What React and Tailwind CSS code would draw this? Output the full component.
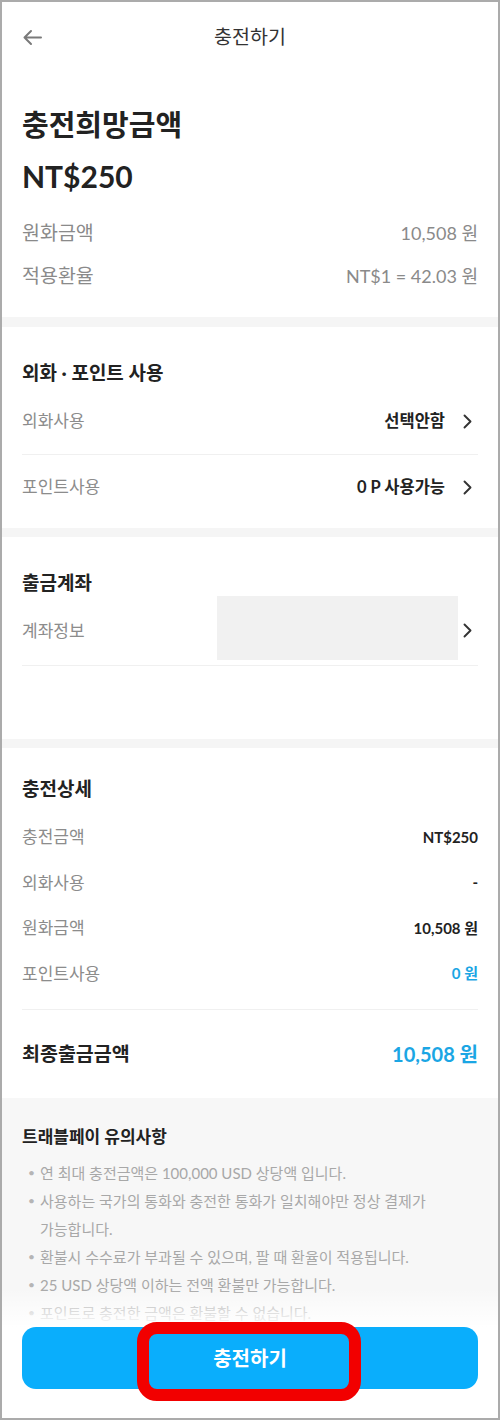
import React from "react";

const FONT = { fontFamily: "Lato, 'Noto Sans CJK KR', 'Noto Sans', sans-serif" };

function Chevron({ className = "" }) {
  return (
    <svg width="9" height="15" viewBox="0 0 9 15" className={className} fill="none">
      <path d="M1.5 1.5 L7.5 7.5 L1.5 13.5" stroke="#333" strokeWidth="1.9" strokeLinecap="round" strokeLinejoin="round" />
    </svg>
  );
}

function DetailRow({ label, value, valueClass = "text-[#222]" }) {
  return (
    <div className="flex h-[45.5px] items-center justify-between">
      <span className="text-[17px] text-[#8c8c8c]">{label}</span>
      <span className={`text-[15px] font-bold ${valueClass}`}>{value}</span>
    </div>
  );
}

const notes = [
  "연 최대 충전금액은 100,000 USD 상당액 입니다.",
  "사용하는 국가의 통화와 충전한 통화가 일치해야만 정상 결제가 가능합니다.",
  "환불시 수수료가 부과될 수 있으며, 팔 때 환율이 적용됩니다.",
  "25 USD 상당액 이하는 전액 환불만 가능합니다.",
  "포인트로 충전한 금액은 환불할 수 없습니다.",
  "해외 가맹점 결제 시 현지 통화로 결제됩니다.",
];

export default function App() {
  return (
    <div style={FONT} className="relative h-[1420px] w-[500px] overflow-hidden border-2 border-[#ababab] bg-white text-[#222]">
      {/* Header */}
      <div className="relative flex h-[70px] items-center justify-center">
        <svg className="absolute left-[20px] top-[27px]" width="20" height="17" viewBox="0 0 20 17" fill="none">
          <path d="M19 8.5H2.5 M9 2 L2.5 8.5 L9 15" stroke="#7a7a7a" strokeWidth="2" strokeLinecap="round" strokeLinejoin="round" />
        </svg>
        <span className="text-[19.5px] text-[#333]">충전하기</span>
      </div>

      {/* Section 1 */}
      <div className="px-5 pt-[35px] pb-[29px]">
        <div className="text-[29px] font-bold leading-[36px]">충전희망금액</div>
        <div className="mt-[15px] text-[30px] font-bold leading-[36px]">NT$250</div>
        <div className="mt-[27px] flex h-[24px] items-center justify-between text-[#8a8a8a]">
          <span className="text-[19.5px]">원화금액</span>
          <span className="text-[18px]">10,508 원</span>
        </div>
        <div className="mt-[19px] flex h-[24px] items-center justify-between text-[#8a8a8a]">
          <span className="text-[19.5px]">적용환율</span>
          <span className="text-[18px]">NT$1 = 42.03 원</span>
        </div>
      </div>

      <div className="h-[10px] bg-[#f5f5f5]" />

      {/* Section 2 */}
      <div className="px-5 pt-[33px] pb-[9px]">
        <div className="text-[19px] font-bold leading-[26px]">외화 · 포인트 사용</div>
        <div className="mt-[2px] flex h-[67px] items-center justify-between border-b border-[#f0f0f0]">
          <span className="text-[17px] text-[#8c8c8c]">외화사용</span>
          <div className="flex items-center gap-[18px]">
            <span className="text-[16.5px] font-bold">선택안함</span>
            <Chevron className="mr-[6px]" />
          </div>
        </div>
        <div className="flex h-[64px] items-center justify-between">
          <span className="text-[17px] text-[#8c8c8c]">포인트사용</span>
          <div className="flex items-center gap-[18px]">
            <span className="text-[16.5px] font-bold">0 P 사용가능</span>
            <Chevron className="mr-[6px]" />
          </div>
        </div>
      </div>

      <div className="h-[9px] bg-[#f5f5f5]" />

      {/* Section 3 */}
      <div className="px-5 pt-[33px] pb-[73px]">
        <div className="text-[19px] font-bold leading-[26px]">출금계좌</div>
        <div className="flex h-[70px] items-center justify-between border-b border-[#f0f0f0]">
          <span className="text-[17px] text-[#8c8c8c]">계좌정보</span>
          <div className="flex h-full items-center">
            <div className="h-[64px] w-[241px] self-start bg-[#f1f1f1]" />
            <Chevron className="ml-[5px] mr-[6px]" />
          </div>
        </div>
      </div>

      <div className="h-[9px] bg-[#f5f5f5]" />

      {/* Section 4 */}
      <div className="px-5 pt-[28px]">
        <div className="text-[19px] font-bold leading-[26px]">충전상세</div>
        <div className="mt-[12px] border-b border-[#f0f0f0] pb-[13px]">
          <DetailRow label="충전금액" value="NT$250" />
          <DetailRow label="외화사용" value="-" />
          <DetailRow label="원화금액" value="10,508 원" />
          <DetailRow label="포인트사용" value="0 원" valueClass="text-[#1ba6e4]" />
        </div>
        <div className="flex h-[88px] items-center justify-between">
          <span className="text-[19.5px] font-bold">최종출금금액</span>
          <span className="text-[20px] font-bold text-[#1ba6e4]">10,508 원</span>
        </div>
      </div>

      {/* Notice */}
      <div className="h-[400px] bg-[#f7f7f7] px-5 pt-[27px]">
        <div className="text-[17px] font-bold leading-[24px]">트래블페이 유의사항</div>
        <ul className="mt-[10px]">
          {notes.map((n) => (
            <li key={n} className="flex break-keep text-[15px] leading-[28px] text-[#a8a8a8]">
              <span className="w-[18px] shrink-0 pl-[6px] text-[12px] text-[#b5b5b5]">•</span>
              <span>{n}</span>
            </li>
          ))}
        </ul>
      </div>

      {/* Bottom bar */}
      <div className="absolute inset-x-0 bottom-0">
        <div className="h-[38px] bg-linear-to-b from-white/0 to-white" />
        <div className="bg-white px-5 pb-[29px]">
          <div className="relative flex h-[62px] items-center justify-center rounded-[14px] bg-[#0aaefc]">
            <span className="text-[20px] font-bold text-white">충전하기</span>
            <div className="absolute left-[115px] top-[-5px] h-[79px] w-[224px] rounded-[20px] border-[12px] border-[#f20000]" />
          </div>
        </div>
      </div>
    </div>
  );
}
